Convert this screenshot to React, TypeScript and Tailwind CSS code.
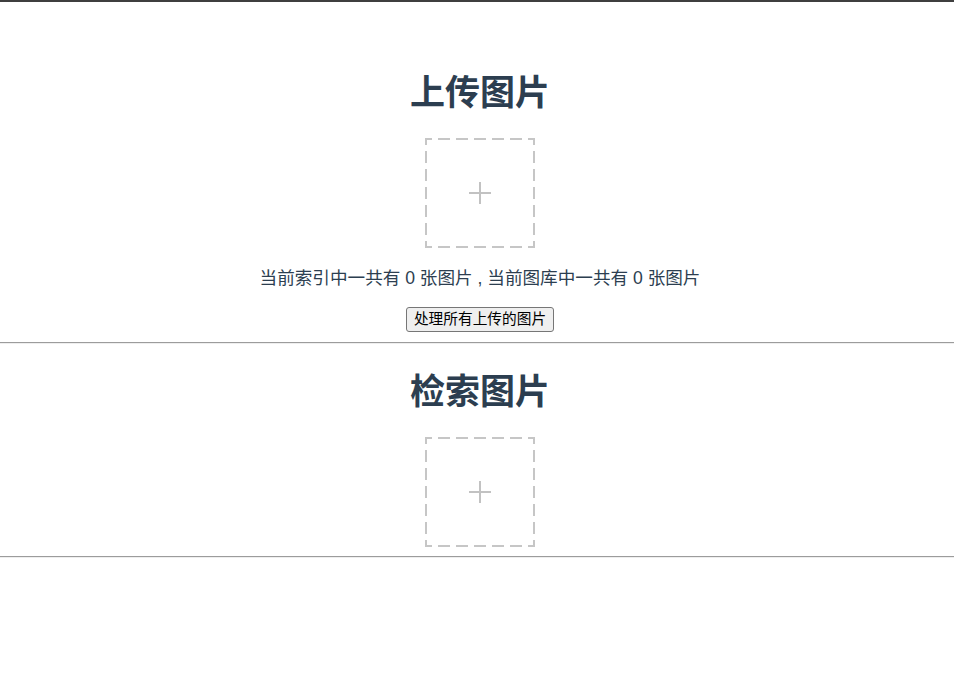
const FONT = "font-['Liberation_Sans','Noto_Sans_CJK_SC',sans-serif]"

function UploadBox() {
  return (
    <svg width="110" height="110" viewBox="0 0 110 110" className="block cursor-pointer">
      <g stroke="#c6c6c6" strokeWidth="2" strokeDasharray="12 6" strokeDashoffset="5" fill="none">
        <path d="M0 1H110" />
        <path d="M0 109H110" />
        <path d="M1 0V110" />
        <path d="M109 0V110" />
      </g>
      <g stroke="#c2c2c2" strokeWidth="2">
        <path d="M44 55H66" />
        <path d="M55 44V66" />
      </g>
    </svg>
  )
}

function Divider() {
  return (
    <div className="w-full">
      <div className="h-px bg-[#9c9c9c]" />
      <div className="h-px bg-[#eeeeee]" />
    </div>
  )
}

export default function App() {
  return (
    <div className={`min-h-[688px] bg-white ${FONT}`}>
      <div className="h-[2px] bg-[#3f3f3f]" />

      <section className="flex flex-col items-center pl-[6px] pb-[10px]">
        <h1 className="mt-[71px] text-[35px] font-bold leading-[40px] text-[#2c3e50]">上传图片</h1>
        <div className="mt-[25px]">
          <UploadBox />
        </div>
        <p className="mt-[18px] text-[17.6px] leading-[24px] text-[#2c3e50]">
          当前索引中一共有 0 张图片 , 当前图库中一共有 0 张图片
        </p>
        <button
          type="button"
          className="mt-[17px] h-[25px] rounded-[3px] border border-[#767676] bg-[#efefef] px-[7px] text-[14.7px] leading-[23px] text-black hover:bg-[#e5e5e5]"
        >
          处理所有上传的图片
        </button>
      </section>

      <Divider />

      <section className="flex flex-col items-center pl-[6px] pb-[9px]">
        <h1 className="mt-[28px] text-[35px] font-bold leading-[40px] text-[#2c3e50]">检索图片</h1>
        <div className="mt-[25px]">
          <UploadBox />
        </div>
      </section>

      <Divider />
    </div>
  )
}
